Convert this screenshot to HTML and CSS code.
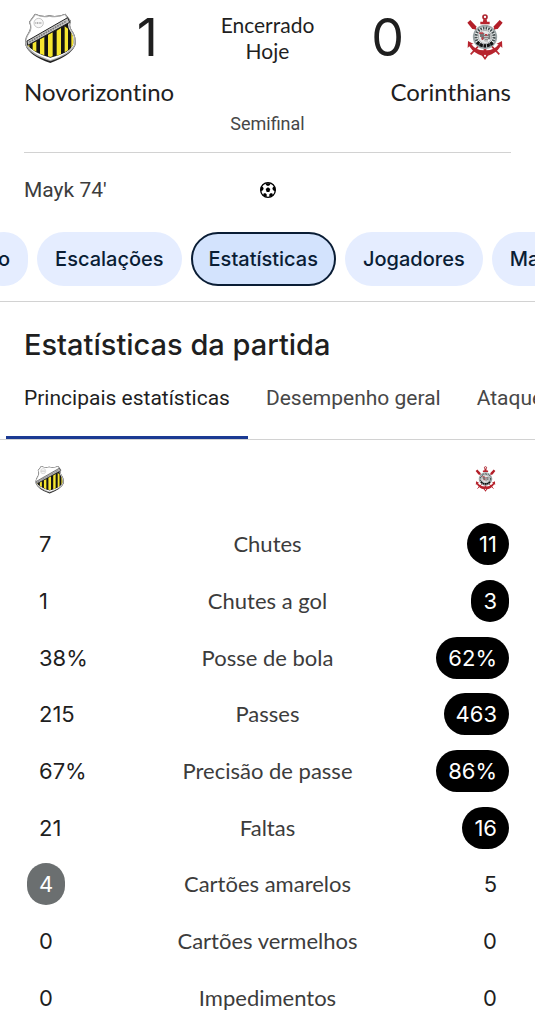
FILE: index.html
```html
<!DOCTYPE html>
<html lang="pt-BR">
<head>
<meta charset="utf-8">
<meta name="viewport" content="width=device-width, initial-scale=1">
<title>Novorizontino 1 x 0 Corinthians</title>
<link rel="stylesheet" href="styles.css">
</head>
<body>
<svg class="defs" aria-hidden="true">
  <defs>
    <clipPath id="shield-clip"><path d="M64 29Q86 38 105 33Q130 37 151 29L163 46Q158 62 168 76Q180 92 177 115Q166 142 108 158Q50 142 38 114Q35 98 47 82Q57 68 50 48Z"/></clipPath>
    <symbol id="novorizontino" viewBox="29 18 156 156">
      <path d="M62 23Q86 34 105 28Q130 33 153 23L170 45Q163 62 174 75Q187 92 183 118Q170 149 108 171Q45 150 33 117Q29 97 42 80Q52 66 44 48Z" fill="#222"/>
      <path d="M62 23Q86 34 105 28Q130 33 153 23L170 45Q163 62 174 75Q187 92 183 118Q170 146 108 166Q45 146 33 117Q29 97 42 80Q52 66 44 48Z" fill="#aaa"/>
      <path d="M64 27Q86 38 105 32Q130 37 151 27L165 46Q160 62 170 76Q182 92 179 116Q167 142 108 162Q49 143 37 114Q34 98 46 81Q56 67 48 48Z" fill="#fff"/>
      <g clip-path="url(#shield-clip)">
        <path d="M34 113L170 42L185 80V118Q168 139 108 155Q58 143 34 113Z" fill="#141414"/>
        <path d="M55 112L66 106V137L55 131ZM77 100L90 93V148L77 143ZM101 86L115 79V151L108 153L101 151ZM127 74L140 66V145L127 149ZM151 61L161 68V133L151 139ZM171 77L184 94L176 123L171 127ZM36 116L45 113V124Z" fill="#f6e62f"/>
      </g>
      <path d="M38 105L160 35L166 49L40 118Z" fill="#c4c4c4" stroke="#222" stroke-width="3"/>
      <path d="M45 108L157 45" stroke="#777" stroke-width="5" stroke-dasharray="5 3"/>
      <circle cx="73" cy="51" r="14" fill="#f8f8f8" stroke="#aaa" stroke-width="2"/>
      <path d="M63 51H83" stroke="#999" stroke-width="5" stroke-dasharray="3 2"/>
    </symbol>
    <symbol id="corinthians" viewBox="58 38 156 156">
      <path d="M102 83L179 165M170 83L93 165" stroke="#b82b34" stroke-width="5"/>
      <path d="M83 70L92 62L111 82L106 90L98 89ZM189 70L180 62L161 82L166 90L174 89Z" fill="#b31f29"/>
      <circle cx="136" cy="53" r="6" fill="none" stroke="#ae2630" stroke-width="5"/>
      <path d="M131 60H141L142 67H150V75H122V67H130Z" fill="#b7242e"/>
      <path d="M132 144H140V153Q164 153 177 135L170 134L187 125L188 146L183 141Q168 164 145 169L136 182L127 169Q104 164 89 141L84 146L85 125L102 134L95 135Q108 153 132 153Z" fill="#b7242e"/>
      <circle cx="136" cy="113" r="34" fill="#f1f3f3" stroke="#9ba5a7" stroke-width="5"/>
      <circle cx="136" cy="113" r="27" fill="none" stroke="#465052" stroke-width="9" stroke-dasharray="5 3"/>
      <path d="M112 129Q136 150 160 129" fill="none" stroke="#111" stroke-width="10" stroke-dasharray="8 3"/>
      <circle cx="136" cy="113" r="20" fill="#e6e8e8" stroke="#8b9192" stroke-width="2"/>
      <path d="M121 101H134V107H145V103H152V120H145V126H135V119H125V113H121Z" fill="#777"/>
      <path d="M119 99H131V104H119ZM136 104H143V109H136ZM126 113H131V122H126Z" fill="#ba4148"/>
      <path d="M133 112H147M134 118H145M136 123H148" stroke="#fff" stroke-width="2"/>
      <circle cx="136" cy="169" r="3" fill="#fff"/>
    </symbol>
  </defs>
</svg>

<header class="match">
  <div class="scoreboard">
    <svg class="crest" role="img" aria-label="Novorizontino"><use href="#novorizontino"/></svg>
    <span class="score">1</span>
    <div class="status">Encerrado<br>Hoje</div>
    <span class="score">0</span>
    <svg class="crest" role="img" aria-label="Corinthians"><use href="#corinthians"/></svg>
  </div>
  <div class="teams"><span>Novorizontino</span><span>Corinthians</span></div>
  <div class="stage">Semifinal</div>
  <div class="goals">
    <span>Mayk 74'</span>
    <svg class="ball" viewBox="0 0 48 48" role="img" aria-label="Gol">
      <circle cx="24" cy="24" r="22" fill="#fff" stroke="#000" stroke-width="4"/>
      <path d="M24 16L31 21L28 30H20L17 21ZM15 4H33L29 10L24 12L19 10ZM2 17L8 14L11 19L9 25L2 28ZM46 17L40 14L37 19L39 25L46 28ZM9 36L15 33L20 37L20 45L13 43ZM39 36L33 33L28 37L28 45L35 43Z"/>
    </svg>
  </div>
</header>

<nav class="chips" aria-label="Seções">
  <button class="chip" type="button">o</button>
  <button class="chip" type="button">Escalações</button>
  <button class="chip chip-active" type="button" aria-current="true">Estatísticas</button>
  <button class="chip" type="button">Jogadores</button>
  <button class="chip" type="button">Mais</button>
</nav>

<main>
  <h1 class="title">Estatísticas da partida</h1>
  <div class="tabs" role="tablist">
    <button class="tab tab-active" type="button" role="tab" aria-selected="true">Principais estatísticas</button>
    <button class="tab" type="button" role="tab" aria-selected="false">Desempenho geral</button>
    <button class="tab" type="button" role="tab" aria-selected="false">Ataque</button>
  </div>
  <div class="table-logos">
    <svg class="crest-small" aria-hidden="true"><use href="#novorizontino"/></svg>
    <svg class="crest-small" aria-hidden="true"><use href="#corinthians"/></svg>
  </div>
  <table class="stats">
    <tbody>
      <tr><td><span class="value">7</span></td><th scope="row">Chutes</th><td><span class="value away">11</span></td></tr>
      <tr><td><span class="value">1</span></td><th scope="row">Chutes a gol</th><td><span class="value away">3</span></td></tr>
      <tr><td><span class="value">38%</span></td><th scope="row">Posse de bola</th><td><span class="value away">62%</span></td></tr>
      <tr><td><span class="value">215</span></td><th scope="row">Passes</th><td><span class="value away">463</span></td></tr>
      <tr><td><span class="value">67%</span></td><th scope="row">Precisão de passe</th><td><span class="value away">86%</span></td></tr>
      <tr><td><span class="value">21</span></td><th scope="row">Faltas</th><td><span class="value away">16</span></td></tr>
      <tr><td><span class="value home">4</span></td><th scope="row">Cartões amarelos</th><td><span class="value">5</span></td></tr>
      <tr><td><span class="value">0</span></td><th scope="row">Cartões vermelhos</th><td><span class="value">0</span></td></tr>
      <tr><td><span class="value">0</span></td><th scope="row">Impedimentos</th><td><span class="value">0</span></td></tr>
    </tbody>
  </table>
</main>
</body>
</html>
```
FILE: styles.css
```css
* { box-sizing: border-box; }
body {
  margin: 0;
  background: #fff;
  color: #1f1f1f;
  font-family: Lato, "Open Sans", sans-serif;
  font-variant-ligatures: none;
  overflow-x: hidden;
}
button { border: 0; background: none; font: inherit; color: inherit; cursor: pointer; }
.defs { position: absolute; width: 0; height: 0; }

.match { padding: 12px 24px 0; }
.scoreboard {
  display: grid;
  grid-template-columns: 52px 1fr 98px 1fr 52px;
  align-items: center;
  justify-items: center;
}
.crest { width: 52px; height: 52px; }
.score { font-family: Inter, sans-serif; font-size: 52px; line-height: 52px; }
.status { font-size: 21px; line-height: 26px; text-align: center; }
.teams {
  display: flex;
  justify-content: space-between;
  padding-top: 12px;
  font-size: 24px;
  line-height: 32px;
}
.stage {
  padding: 4px 0 16px;
  border-bottom: 1px solid #d2d2d2;
  color: #474747;
  font: 18px/24px Roboto, sans-serif;
  text-align: center;
}
.goals {
  display: grid;
  grid-template-columns: 1fr 16px 1fr;
  align-items: center;
  padding: 24px 0 29px;
  color: #3c3c3c;
  font: 21px/26px Roboto, sans-serif;
}
.ball { width: 16px; height: 16px; }

.chips {
  display: flex;
  gap: 9px;
  padding-bottom: 15px;
  border-bottom: 1px solid #d2d2d2;
  overflow: hidden;
}
.chip {
  flex: none;
  height: 54px;
  padding: 0 18px;
  border-radius: 27px;
  background: #e5edff;
  color: #0a1d35;
  font: 500 20px/26px Inter, sans-serif;
}
.chip:first-child { margin-left: -20px; }
.chip-active { border: 2px solid #0a1d35; background: #d3e3fd; padding: 0 16px; }

.title { margin: 0; padding: 25px 24px 19px; font: 500 29px/36px Inter, sans-serif; }
.tabs {
  display: flex;
  padding-left: 6px;
  border-bottom: 1px solid #d2d2d2;
  overflow: hidden;
}
.tab {
  flex: none;
  height: 57px;
  padding: 0 18px 23px;
  border-bottom: 3px solid transparent;
  color: #474747;
  font: 21px/26px Roboto, sans-serif;
}
.tab-active { border-bottom-color: #1b3a93; color: #1f1f1f; }

.table-logos {
  display: flex;
  justify-content: space-between;
  padding: 25px 35px 22px;
}
.crest-small { width: 29px; height: 29px; }
.stats {
  width: 100%;
  height: 510px;
  border-collapse: collapse;
  table-layout: fixed;
}
.stats td, .stats th { padding: 0; vertical-align: middle; }
.stats td:first-child { width: 26%; padding-left: 27px; }
.stats td:last-child { width: 26%; padding-right: 26px; text-align: right; }
.stats th { color: #3c3c3c; font-size: 22px; line-height: 28px; font-weight: 400; }
.value {
  display: inline-block;
  padding: 0 12px;
  border-radius: 21px;
  font-family: Inter, sans-serif;
  font-size: 22px;
  line-height: 42px;
  vertical-align: middle;
}
.away { background: #000; color: #fff; }
.home { background: #6b6f70; color: #fff; }
```
